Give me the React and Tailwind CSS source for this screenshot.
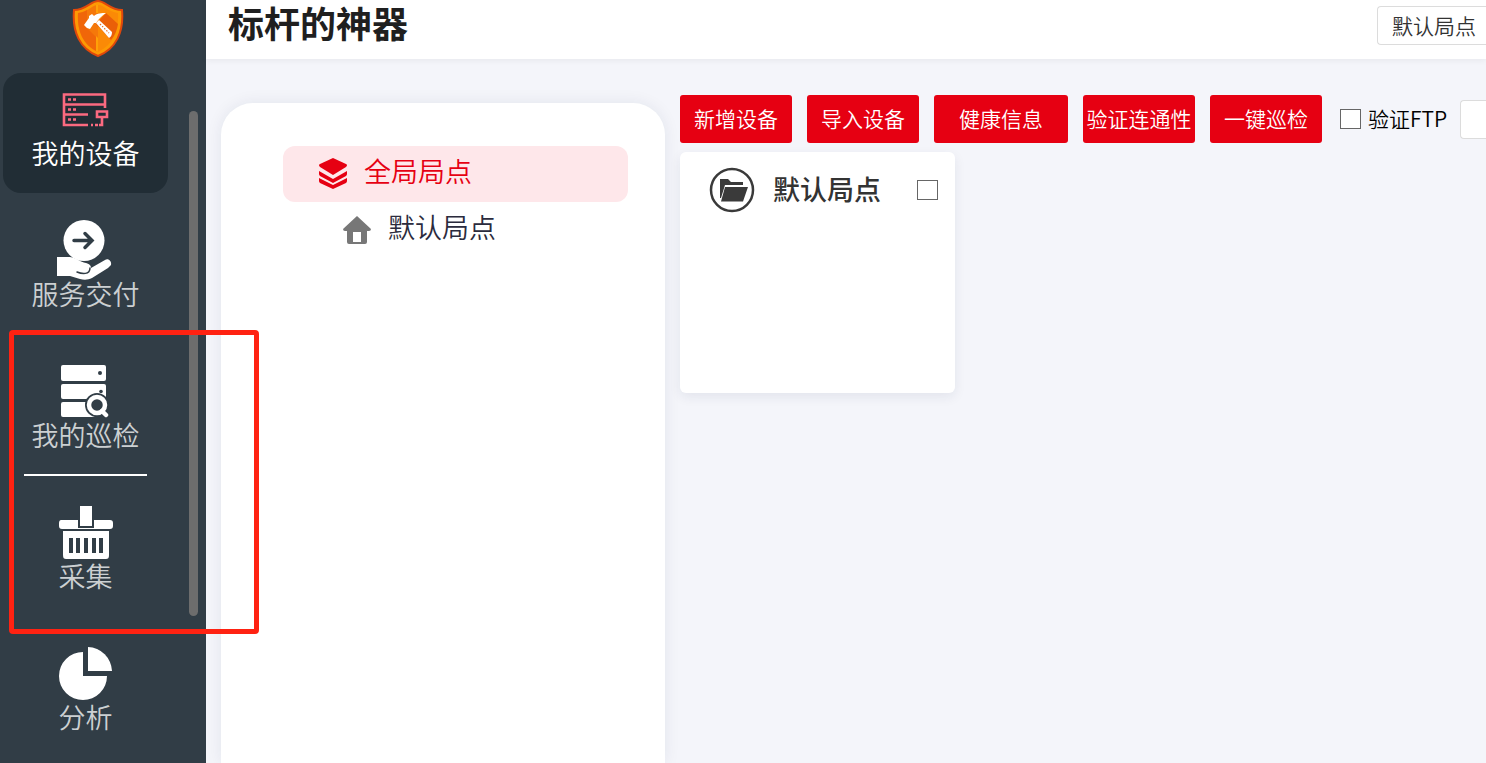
import React from "react";

const Logo = () => (
  <svg width="52" height="58" viewBox="0 0 52 58">
    <path
      d="M26 1C33 1 38 10 50 10C52 32 44 49 26 56C8 49 0 32 2 10C14 10 19 1 26 1Z"
      fill="#fd9a04"
      stroke="#e0480b"
      strokeWidth="2"
    />
    <path d="M26 5C20 5 16 12 6 13C5 31 11 45 26 52Z" fill="#f5780a" />
    <path d="M26 5C32 5 36 12 46 13C47 31 41 45 26 52Z" fill="#fb8a06" />
    <path d="M12 25L26 39V52C11 45 5 31 6 13C9 13 12 12 15 10V20Z" fill="#ec5a08" opacity=".6" />
    <path d="M34 13L46 24C45 30 43 35 39 40L24 24Z" fill="#e4500a" opacity=".75" />
    <path d="M24 5H26V13H24ZM24 36L26 38V52L24 51Z" fill="#ffa008" />
    <path
      d="M12 25L17 18V16L20 14L22 16C25 13 30 13 34 13C31 15 29 17 27 19L24 23H22L18 29L15 28Z"
      fill="#fff"
    />
    <path d="M24 23L27 20L40 32C40 35 39 37 37 38Z" fill="#fff" />
    <path d="M28 24L37 33" stroke="#e86a1c" strokeWidth="1.2" strokeDasharray="1.5 1.5" />
  </svg>
);

const DeviceIcon = () => (
  <svg width="47" height="36" viewBox="0 -2 47 36" fill="none" stroke="#fb6a80" strokeWidth="2.6">
    <path d="M26 32H2V1.5H43V15M2 11.5H43M2 21.5H26" />
    <path d="M35 18.5H45V24H35ZM40 24V32H37" />
    <path d="M6 6.5H9M11 6.5H14M6 16.5H9M11 16.5H14M6 26.5H9M11 26.5H14M29 32H31M33 32H36" />
  </svg>
);

const DeliveryIcon = () => (
  <svg width="58" height="60" viewBox="1 0 58 60">
    <circle cx="28" cy="20.5" r="20.5" fill="#fff" />
    <path
      d="M18 20.5H36M29 13.5L36 20.5L29 27.5"
      fill="none"
      stroke="#313d46"
      strokeWidth="3.5"
      strokeLinecap="round"
    />
    <path
      d="M1 37H14C21 38 24 42 30 43C34 44 35 46 35 48L49 40C52 38 56 41 55 45C54 46 53 47 52 48L36 58C32 60 28 60 24 59L14 56H1Z"
      fill="#fff"
    />
    <path
      d="M21 52C26 54 34 55 34 48"
      fill="none"
      stroke="#313d46"
      strokeWidth="1.5"
      strokeLinecap="round"
    />
  </svg>
);

const InspectIcon = () => (
  <svg width="50" height="54" viewBox="0 0 50 54">
    <rect x="0" y="1" width="45" height="16" rx="2" fill="#fff" />
    <rect x="0" y="20" width="45" height="15" rx="2" fill="#fff" />
    <rect x="0" y="38" width="34" height="15" rx="2" fill="#fff" />
    <circle cx="39" cy="9" r="2" fill="#313d46" />
    <circle cx="40" cy="27.5" r="1.8" fill="#313d46" />
    <circle cx="36" cy="41" r="12" fill="#313d46" />
    <circle cx="36" cy="41" r="8" fill="none" stroke="#fff" strokeWidth="4.5" />
    <path d="M41 47L45 51" stroke="#fff" strokeWidth="4.5" strokeLinecap="round" />
  </svg>
);

const CollectIcon = () => (
  <svg width="54" height="56" viewBox="0 -2 54 56" fill="#fff">
    <path d="M21 0H33V20H21Z" />
    <path d="M2 14H19V22H35V14H51C53 14 54 15 54 17V20C54 22 53 23 51 23H3C1 23 0 22 0 20V17C0 15 1 14 2 14Z" />
    <path d="M4 25H50V49C50 52 49 53 47 53H7C5 53 4 52 4 49Z" />
    <path
      d="M12 32V47M19 32V47M27 32V47M35 32V47M42 32V47"
      stroke="#313d46"
      strokeWidth="4"
    />
  </svg>
);

const AnalysisIcon = () => (
  <svg width="54" height="54" viewBox="0 0 54 54" fill="#fff">
    <path d="M24 6V30H48A24 24 0 1 1 24 6Z" />
    <path d="M29 1A25 25 0 0 1 53 25H29Z" />
  </svg>
);

const LayersIcon = () => (
  <svg width="30" height="32" viewBox="0 0 30 32" fill="#e60012">
    <path d="M15 0L28 6Q30 7 28 9L15 17L2 9Q0 7 2 6Z" />
    <path d="M1 13L15 21L29 13V16Q29 17 28 18L15 25L2 18Q1 17 1 16Z" />
    <path d="M1 20L15 27L29 20V23Q29 24 28 25L15 31L2 25Q1 24 1 23Z" />
  </svg>
);

const HomeIcon = () => (
  <svg width="28" height="28" viewBox="0 0 28 28" fill="#777">
    <path d="M14 0L28 13Q28 15 26 15H24V26Q24 28 22 28H18V16H10V28H6Q4 28 4 26V15H2Q0 15 0 13Z" />
    <path d="M10 26H18V28H10Z" />
  </svg>
);

const FolderIcon = () => (
  <svg width="46" height="46" viewBox="0 0 46 46" fill="#3a3a3a">
    <circle cx="23" cy="23" r="21" fill="none" stroke="#3a3a3a" strokeWidth="2.5" />
    <path d="M11 12H19L22 15H34V18H16L12 31H11Z" />
    <path d="M16 20H39L34 34.5H12Z" />
  </svg>
);

const menus = [
  { name: "我的设备", icon: <DeviceIcon />, active: true },
  { name: "服务交付", icon: <DeliveryIcon /> },
  { name: "我的巡检", icon: <InspectIcon />, divider: true },
  { name: "采集", icon: <CollectIcon /> },
  { name: "分析", icon: <AnalysisIcon /> },
];

const actions = [
  { name: "新增设备", width: "w-28" },
  { name: "导入设备", width: "w-28" },
  { name: "健康信息", width: "w-[134px]" },
  { name: "验证连通性", width: "w-28" },
  { name: "一键巡检", width: "w-28" },
];

const Checkbox = (props) => (
  <input
    type="checkbox"
    className="appearance-none w-[21px] h-5 shrink-0 bg-white border border-[#666] checked:bg-[#e60012]"
    {...props}
  />
);

const Sidebar = () => (
  <aside className="w-[206px] shrink-0 flex bg-[#313d46] overflow-hidden">
    <div className="w-[168px] pl-[3px] shrink-0">
      <div className="flex justify-center h-[73px] pl-6">
        <Logo />
      </div>
      <nav className="flex flex-col gap-[21px]">
        {menus.map((item) => (
          <button
            key={item.name}
            className={`h-[120px] shrink-0 pt-1.5 flex flex-col items-center justify-start rounded-[18px] text-[27px] leading-[28px] font-[350] ${
              item.active ? "bg-[#212d35] text-white" : "text-[#ccd0d2]"
            }`}
          >
            <span className="h-[60px] flex items-center">{item.icon}</span>
            {item.name}
            {item.divider && <span className="mt-[25px] -mb-1 w-[123px] h-0.5 shrink-0 bg-white" />}
          </button>
        ))}
      </nav>
    </div>
    <div className="ml-[21px] mt-[111px] w-[9px] h-[505px] rounded-full bg-[#6d6d6d]" />
  </aside>
);

const SiteTree = () => (
  <section className="w-[444px] shrink-0 mt-11 pt-[43px] pl-[62px] pr-[37px] bg-white rounded-t-[32px] shadow-[0_0_16px_rgba(30,40,80,0.08)]">
    <a
      href="#all"
      className="h-14 pl-[35px] flex items-center gap-4 rounded-xl bg-[#fee7ea] text-[#e60012] text-[27px] leading-[30px] font-[350]"
    >
      <LayersIcon />
      <span className="pb-1.5">全局局点</span>
    </a>
    <a
      href="#default"
      className="h-14 pl-[60px] flex items-center gap-[17px] text-[#2b2b3d] text-[27px] leading-[30px] font-[350]"
    >
      <HomeIcon />
      <span className="pb-1.5">默认局点</span>
    </a>
  </section>
);

const App = () => {
  return (
    <div className="h-screen flex overflow-hidden bg-[#f4f5fa] font-['Noto_Sans_CJK_SC',sans-serif]">
      <Sidebar />

      <div className="flex-1 min-w-0 flex flex-col">
        <header className="h-[59px] shrink-0 pl-[22px] flex items-start justify-between bg-white shadow-[0_2px_6px_rgba(0,0,0,0.05)]">
          <h1 className="font-['Liberation_Sans','Noto_Sans_CJK_SC',sans-serif] text-4xl leading-[52px] font-bold text-[#1f1f1f]">
            标杆的神器
          </h1>
          <select
            aria-label="局点"
            className="appearance-none mt-1.5 w-[109px] h-[39px] pl-3.5 pb-0.5 bg-white border border-r-0 border-[#dcdcdc] rounded-l text-[21px] leading-[30px] font-[350] text-[#333]"
          >
            <option>默认局点</option>
          </select>
        </header>

        <main className="flex-1 min-h-0 pl-[15px] flex gap-[15px]">
          <SiteTree />

          <section className="flex-1 min-w-0 pt-9">
            <div className="flex items-center gap-[15px]">
              {actions.map((item) => (
                <button
                  key={item.name}
                  className={`${item.width} h-12 pb-0.5 shrink-0 rounded-[3px] bg-[#e60012] text-white text-[21px] leading-[30px] font-[350] whitespace-nowrap`}
                >
                  {item.name}
                </button>
              ))}
              <label className="ml-[3px] -mr-0.5 flex items-center gap-[7px] shrink-0 text-[21px] leading-[30px] font-[350] text-black">
                <Checkbox />
                <span className="pb-0.5">验证FTP</span>
              </label>
              <input
                type="text"
                aria-label="搜索"
                className="flex-1 min-w-0 h-[39px] px-3 bg-white border border-r-0 border-[#dcdcdc] rounded-l"
              />
            </div>

            <div className="mt-[9px] w-[275px] h-[241px] pt-[15px] pl-[29px] pr-[17px] flex items-start rounded-md bg-white shadow-[0_4px_12px_rgba(30,40,80,0.08)]">
              <label className="flex-1 flex items-center">
                <FolderIcon />
                <span className="ml-[18px] mr-auto pb-0.5 text-[27px] leading-[30px] font-medium text-[#333]">
                  默认局点
                </span>
                <Checkbox />
              </label>
            </div>
          </section>
        </main>
      </div>

      {/* highlight frame over the menu */}
      <div className="absolute left-[9px] top-[330px] w-[250px] h-[304px] border-[5px] border-[#ff2212] rounded pointer-events-none" />
    </div>
  );
};

export default App;
